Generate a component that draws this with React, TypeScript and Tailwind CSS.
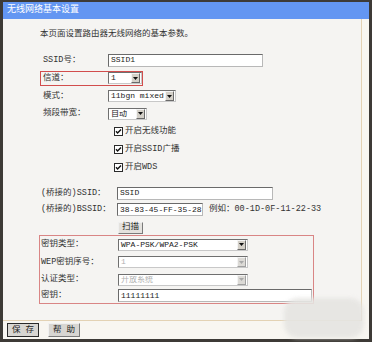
import React from "react";

const FONT = { fontFamily: '"Liberation Mono", "Noto Sans CJK SC", monospace' };

function Arrow({ disabled }: { disabled?: boolean }) {
  return (
    <div
      className={
        "flex h-[10px] w-[9px] shrink-0 items-center justify-center border " +
        (disabled
          ? "border-t-[#f4f4f4] border-l-[#f4f4f4] border-r-[#a0a0a0] border-b-[#a0a0a0] bg-[#dcdad6]"
          : "border-t-[#f4f4f4] border-l-[#f4f4f4] border-r-[#6a6a6a] border-b-[#6a6a6a] bg-[#d4d0c8]")
      }
    >
      <svg width="5" height="3" viewBox="0 0 5 3">
        <polygon points="0,0 5,0 2.5,3" fill={disabled ? "#a8a8a8" : "#111"} />
      </svg>
    </div>
  );
}

function Select({ w, value, disabled }: { w: string; value: string; disabled?: boolean }) {
  return (
    <div
      className={
        w +
        " flex h-[12px] items-center border border-t-[#6f6f6f] border-l-[#6f6f6f] border-r-[#c8c8c8] border-b-[#c8c8c8] bg-white pr-[1px]"
      }
    >
      <span
        className={
          "flex-1 overflow-hidden whitespace-nowrap pl-[2px] text-[8px] leading-none " +
          (disabled ? "text-[#b0b0b0]" : "text-[#222]")
        }
      >
        {value}
      </span>
      <Arrow disabled={disabled} />
    </div>
  );
}

function Input({ w, value }: { w: string; value: string }) {
  return (
    <div
      className={
        w +
        " flex h-[13px] items-center overflow-hidden whitespace-nowrap border border-t-[#6a6a6a] border-l-[#6a6a6a] border-r-[#b8b8b8] border-b-[#b8b8b8] bg-white pl-[2px] text-[8px] leading-none text-[#222]"
      }
    >
      {value}
    </div>
  );
}

function Check({ label }: { label: string }) {
  return (
    <div className="flex h-[18px] items-center pl-[108px]">
      <svg width="9" height="9" viewBox="0 0 9 9" className="ml-[3px]">
        <rect x="0.5" y="0.5" width="8" height="8" fill="#fff" stroke="#2a2a2a" />
        <path d="M2 4.2 L3.6 6 L7 2.4" stroke="#111" strokeWidth="1.4" fill="none" />
      </svg>
      <span className="ml-[2px] whitespace-nowrap text-[8.5px] leading-none text-[#333]">{label}</span>
    </div>
  );
}

export default function App() {
  return (
    <div
      className="flex h-[342px] w-[372px] flex-col bg-[#3d3a36] pb-[3px] pl-[3px] pr-[3px] pt-[2px]"
      style={FONT}
    >
      <div className="relative flex flex-1 flex-col bg-[#f8f6f1]">
        <div className="flex h-[17px] items-center bg-[#6396f2] pl-[4px] text-[9px] leading-none text-white">
          无线网络基本设置
        </div>
        <div className="flex h-[302px] w-[359px] flex-col whitespace-nowrap border-b border-r border-[#e3d2b4] bg-[#f5f4f2] pt-[8px] text-[#333]">
          <div className="flex h-[14px] items-center pl-[37px] text-[8.5px] leading-none text-[#333]">
            本页面设置路由器无线网络的基本参数。
          </div>

          <div className="mt-[10px] flex h-[18px] items-center pl-[40px]">
            <span className="w-[65px] text-[8.5px] leading-none">SSID号：</span>
            <Input w="w-[155px]" value="SSID1" />
          </div>

          <div className="flex h-[18px] items-center pl-[37px]">
            <div className="flex h-[15px] items-center border border-[#d24d4d] pl-[2px]">
              <span className="w-[65px] text-[8.5px] leading-none">信道：</span>
              <Select w="w-[34px]" value="1" />
            </div>
          </div>

          <div className="flex h-[18px] items-center pl-[40px]">
            <span className="w-[65px] text-[8.5px] leading-none">模式：</span>
            <Select w="w-[68px]" value="11bgn mixed" />
          </div>

          <div className="flex h-[17px] items-center pl-[40px]">
            <span className="w-[65px] text-[8.5px] leading-none">频段带宽：</span>
            <Select w="w-[39px]" value="自动" />
          </div>

          <Check label="开启无线功能" />
          <Check label="开启SSID广播" />
          <Check label="开启WDS" />

          <div className="mt-[9px] flex h-[16px] items-center pl-[38px]">
            <span className="w-[76px] text-[8.5px] leading-none">(桥接的)SSID：</span>
            <Input w="w-[156px]" value="SSID" />
          </div>

          <div className="flex h-[17px] items-center pl-[38px]">
            <span className="w-[76px] text-[8.5px] leading-none">(桥接的)BSSID：</span>
            <Input w="w-[86px]" value="38-83-45-FF-35-28" />
            <span className="ml-[6px] text-[8.5px] leading-none">例如：00-1D-0F-11-22-33</span>
          </div>

          <div className="mt-[3px] flex h-[13px] items-center pl-[115px]">
            <div className="flex h-[12px] w-[25px] items-center justify-center border border-t-[#f0f0f0] border-l-[#f0f0f0] border-r-[#7a7a7a] border-b-[#7a7a7a] bg-[#e4e2de] text-[8.5px] leading-none text-[#222]">
              扫描
            </div>
          </div>

          <div className="ml-[36px] mt-[1px] flex w-[275px] flex-col border border-[#d98585]">
            <div className="flex h-[17px] items-center pl-[1px]">
              <span className="w-[77px] text-[8.5px] leading-none">密钥类型：</span>
              <Select w="w-[130px]" value="WPA-PSK/WPA2-PSK" />
            </div>
            <div className="flex h-[18px] items-center pl-[1px]">
              <span className="w-[77px] text-[8.5px] leading-none">WEP密钥序号：</span>
              <Select w="w-[130px]" value="1" disabled />
            </div>
            <div className="flex h-[17px] items-center pl-[1px]">
              <span className="w-[77px] text-[8.5px] leading-none">认证类型：</span>
              <Select w="w-[130px]" value="开放系统" disabled />
            </div>
            <div className="flex h-[15px] items-center pl-[1px]">
              <span className="w-[77px] text-[8.5px] leading-none">密钥：</span>
              <Input w="w-[194px]" value="11111111" />
            </div>
          </div>
        </div>

        <div className="flex flex-1 items-center gap-[9px] pl-[4px]">
          <div className="flex h-[14px] w-[32px] items-center justify-center border border-[#2a2a2a] bg-[#d8d6d2] text-[8.5px] leading-none text-[#222]">
            保 存
          </div>
          <div className="flex h-[14px] w-[32px] items-center justify-center border border-t-[#f0f0f0] border-l-[#f0f0f0] border-r-[#7a7a7a] border-b-[#7a7a7a] bg-[#d8d6d2] text-[8.5px] leading-none text-[#222]">
            帮 助
          </div>
        </div>

        <div className="pointer-events-none absolute left-[281px] top-[296px] h-[40px] w-[80px] rounded-[14px] bg-[#e6e5e2] opacity-90 blur-[2px]" />
      </div>
    </div>
  );
}
